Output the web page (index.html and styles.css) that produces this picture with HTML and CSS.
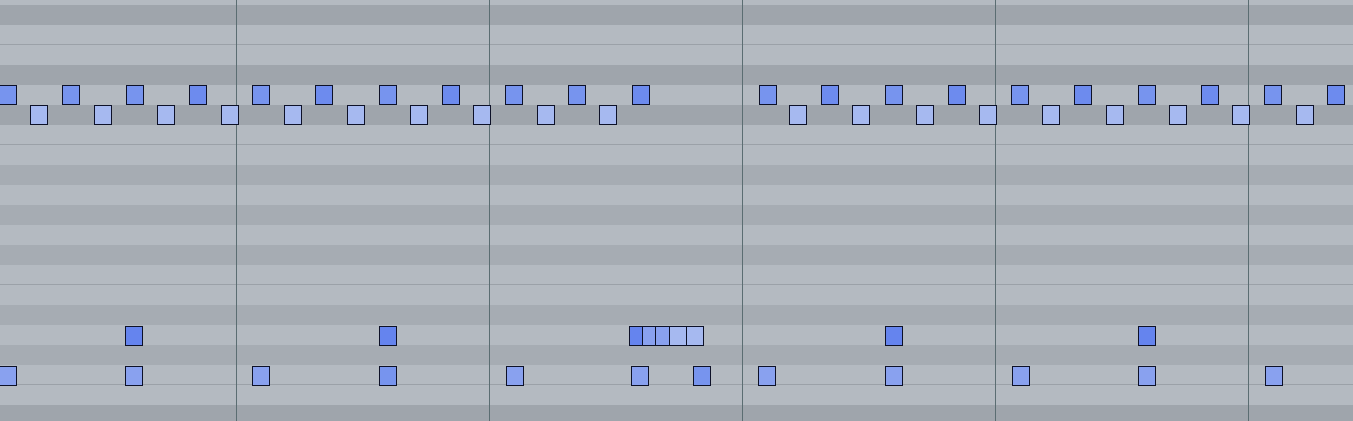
FILE: index.html
```html
<!DOCTYPE html>
<html lang="en">
<head>
    <meta charset="UTF-8">
    <meta name="viewport" content="width=device-width, initial-scale=1.0">
    <title>Piano Roll</title>
    <link rel="stylesheet" href="styles.css">
</head>
<body>

    <div class="roll">
        <!-- key rows, top to bottom -->
        <div class="keys">
            <div class="row white edge"></div>
            <div class="row black deep"></div>
            <div class="row white split"></div>
            <div class="row white"></div>
            <div class="row black deep"></div>
            <div class="row white"></div>
            <div class="row black deep"></div>
            <div class="row white split"></div>
            <div class="row white"></div>
            <div class="row black"></div>
            <div class="row white"></div>
            <div class="row black"></div>
            <div class="row white"></div>
            <div class="row black"></div>
            <div class="row white split"></div>
            <div class="row white"></div>
            <div class="row black"></div>
            <div class="row white"></div>
            <div class="row black"></div>
            <div class="row white split"></div>
            <div class="row white"></div>
            <div class="row black deep"></div>
        </div>

        <!-- bar lines -->
        <div class="bar" style="left: 236px"></div>
        <div class="bar" style="left: 489px"></div>
        <div class="bar" style="left: 742px"></div>
        <div class="bar" style="left: 995px"></div>
        <div class="bar" style="left: 1248px"></div>

        <div id="notes"></div>
    </div>

    <script>
        // [row top, x, velocity class]
        const notes = [
            [85, -1, 'v3'], [85, 62, 'v3'], [85, 126, 'v3'], [85, 189, 'v2'], [85, 252, 'v3'],
            [85, 315, 'v2'], [85, 379, 'v3'], [85, 442, 'v2'], [85, 505, 'v3'], [85, 568, 'v3'],
            [85, 632, 'v2'], [85, 759, 'v3'], [85, 821, 'v2'], [85, 885, 'v3'], [85, 948, 'v2'],
            [85, 1011, 'v3'], [85, 1074, 'v2'], [85, 1138, 'v3'], [85, 1201, 'v2'], [85, 1264, 'v3'],
            [85, 1327, 'v2'],

            [105, 30, 'v5'], [105, 94, 'v5'], [105, 157, 'v5'], [105, 221, 'v5'], [105, 284, 'v5'],
            [105, 347, 'v5'], [105, 410, 'v5'], [105, 473, 'v5'], [105, 537, 'v5'], [105, 599, 'v5'],
            [105, 789, 'v5'], [105, 852, 'v5'], [105, 916, 'v5'], [105, 979, 'v5'], [105, 1042, 'v5'],
            [105, 1106, 'v5'], [105, 1169, 'v5'], [105, 1232, 'v5'], [105, 1296, 'v5'],

            [326, 125, 'v1'], [326, 379, 'v1'],
            [326, 629, 'v1'], [326, 642, 'v4'], [326, 655, 'v4'], [326, 669, 'v5'], [326, 686, 'v5'],
            [326, 885, 'v1'], [326, 1138, 'v1'],

            [366, -1, 'v4'], [366, 125, 'v4'], [366, 252, 'v4'], [366, 379, 'v3'], [366, 506, 'v4'],
            [366, 631, 'v4'], [366, 693, 'v3'], [366, 758, 'v4'], [366, 885, 'v4'], [366, 1012, 'v4'],
            [366, 1138, 'v4'], [366, 1265, 'v4']
        ];

        const layer = document.getElementById('notes');
        notes.forEach(([top, left, vel]) => {
            const n = document.createElement('div');
            n.className = 'note ' + vel;
            n.style.top = top + 'px';
            n.style.left = left + 'px';
            layer.appendChild(n);
        });
    </script>

</body>
</html>
```

FILE: styles.css
```css
body {
    margin: 0;
    background-color: #b4bac1;
    overflow: hidden;
    font-family: "Liberation Sans", Arial, sans-serif;
}
.roll {
    position: relative;
    width: 1353px;
    height: 421px;
    overflow: hidden;
}
.keys {
    display: flex;
    flex-direction: column;
}
.row {
    height: 20px;
    box-sizing: border-box;
    flex-shrink: 0;
}
.row.edge {
    height: 5px;
}
.white {
    background-color: #b4bac1;
}
.black {
    background-color: #a6acb3;
}
.black.deep {
    background-color: #9fa5ac;
}
.split {
    border-bottom: 1px solid #9ba1a8;
}
.bar {
    position: absolute;
    top: 0;
    bottom: 0;
    width: 1px;
    background-color: #5b6d72;
}
.note {
    position: absolute;
    width: 18px;
    height: 20px;
    box-sizing: border-box;
    border: 1.5px solid #0d1128;
}
.v1 { background-color: #6584ee; }
.v2 { background-color: #6d8bee; }
.v3 { background-color: #7794ee; }
.v4 { background-color: #89a1ef; }
.v5 { background-color: #a6b9f0; }
```
